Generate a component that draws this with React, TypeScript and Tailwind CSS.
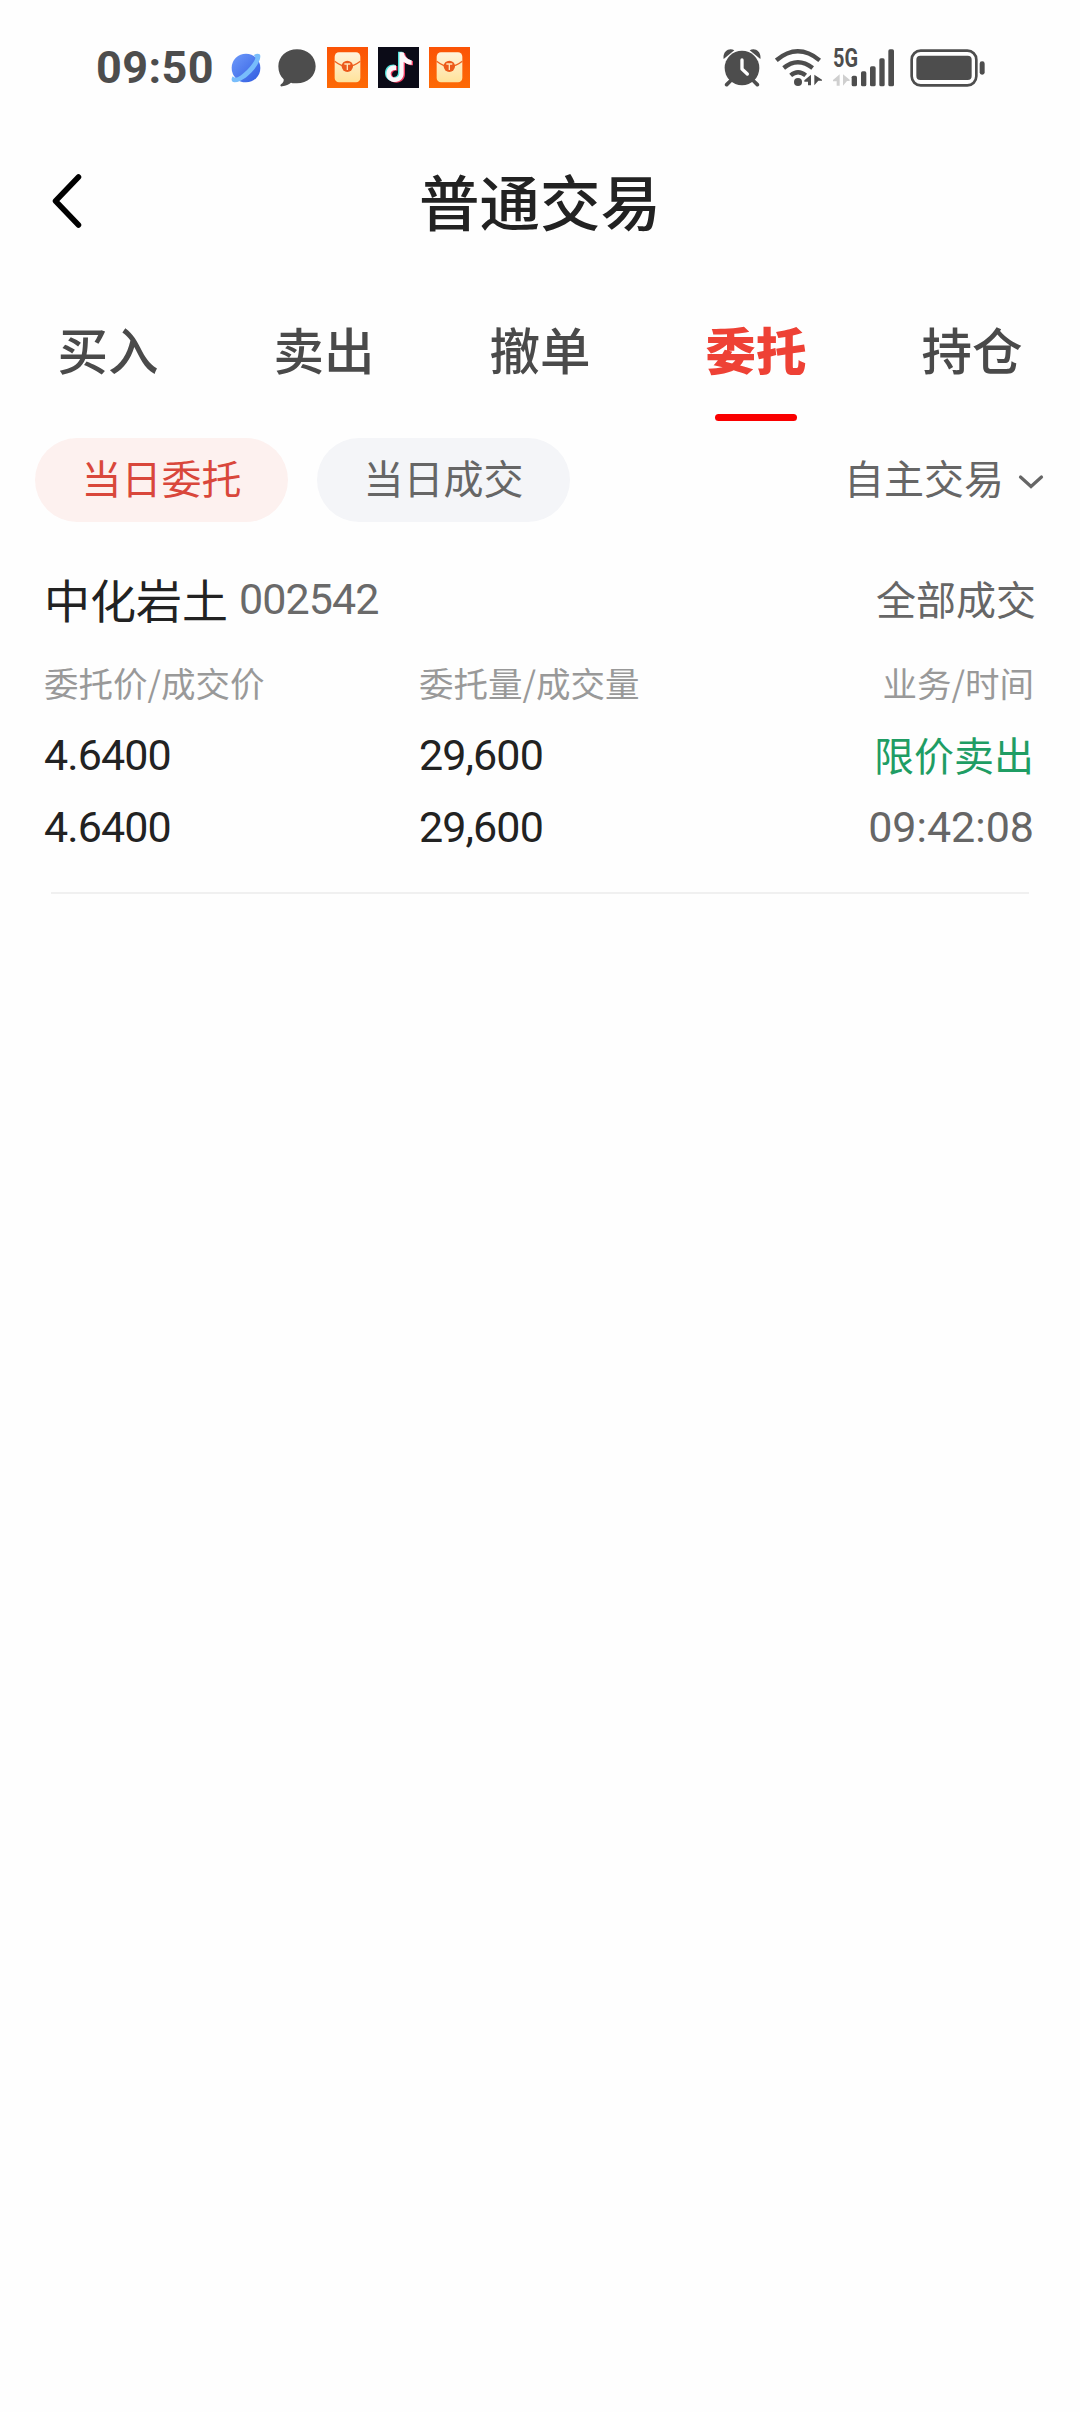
import React from 'react';

const tabs = ['买入', '卖出', '撤单', '委托', '持仓'];

const orders = [
    {
        name: '中化岩土',
        code: '002542',
        status: '全部成交',
        orderPrice: '4.6400',
        dealPrice: '4.6400',
        orderQty: '29,600',
        dealQty: '29,600',
        type: '限价卖出',
        time: '09:42:08',
    },
];

function PlanetIcon() {
    return (
        <svg viewBox="0 0 90 90" className="ml-[17px] h-[30px] w-[30px]">
            <defs>
                <linearGradient id="planet" x1="0" y1="0" x2="1" y2="1">
                    <stop offset="0" stopColor="#6f9bfb" />
                    <stop offset="1" stopColor="#2f5be0" />
                </linearGradient>
            </defs>
            <circle cx="45" cy="45" r="43" fill="url(#planet)" />
            <path d="M68 7 C76 0 88 0 88 9 C88 38 42 86 11 88 C0 88 0 78 5 70 C10 76 18 75 28 68 C46 56 66 34 72 19 C74 13 73 9 68 7Z" fill="#78bdfb" />
        </svg>
    );
}

function BubbleIcon() {
    return (
        <svg viewBox="0 0 114 114" className="ml-[17px] h-[38px] w-[38px]">
            <path d="M57 1C26 1 1 23 1 52c0 17 6 30 16 39 1 6-2 11-8 15-4 4-1 7 4 6 11-2 19-6 26-11 6 2 12 2 18 2 31 0 56-22 56-51S88 1 57 1Z" fill="#4d4d4d" />
        </svg>
    );
}

function PacketIcon() {
    return (
        <svg viewBox="0 0 123 123" className="h-[41px] w-[41px]">
            <defs>
                <linearGradient id="packetBg" x1="0" y1="0" x2="0" y2="1">
                    <stop offset="0" stopColor="#fb5306" />
                    <stop offset="1" stopColor="#fd6a05" />
                </linearGradient>
                <linearGradient id="packet" x1="0" y1="0" x2="0" y2="1">
                    <stop offset="0" stopColor="#fff3dc" />
                    <stop offset="1" stopColor="#ffe29a" />
                </linearGradient>
            </defs>
            <rect width="123" height="123" fill="url(#packetBg)" />
            <rect x="23" y="16" width="77" height="90" rx="13" fill="url(#packet)" />
            <path d="M23 43Q42 58 61 59Q81 58 100 43" fill="none" stroke="#ef6420" strokeWidth="4" />
            <circle cx="61" cy="58" r="17" fill="#ec5a1b" />
            <path d="M52 51H70M61 51V69" stroke="#ffe3b8" strokeWidth="4" />
        </svg>
    );
}

function TiktokIcon() {
    const note = 'M64 16H77C79 29 88 38 101 40V53C92 53 84 50 77 45V79C77 95 66 105 51 105C36 105 25 95 25 80C25 64 38 53 54 55V69C46 68 38 72 38 80C38 87 44 92 51 92C58 92 64 87 64 79Z';
    return (
        <svg viewBox="0 0 123 123" className="h-[41px] w-[41px]">
            <rect width="123" height="123" fill="#0b0b17" />
            <path d={note} fill="#4fe3dc" transform="translate(-4 -2)" />
            <path d={note} fill="#ef3e63" transform="translate(4 2)" />
            <path d={note} fill="#fbf7fa" />
        </svg>
    );
}

function AlarmIcon() {
    return (
        <svg viewBox="0 0 114 114" className="h-[38px] w-[38px]">
            <circle cx="57" cy="57" r="52" fill="#4d4d4d" />
            <path d="M2 30C-2 8 18-6 34 4Z M112 30C116 8 96-6 80 4Z" fill="#4d4d4d" />
            <path d="M22 96L11 107M92 96L103 107" stroke="#4d4d4d" strokeWidth="11" strokeLinecap="round" />
            <path d="M57 33V60L73 75" fill="none" stroke="#fefefe" strokeWidth="10" strokeLinecap="round" strokeLinejoin="round" />
        </svg>
    );
}

function WifiIcon() {
    return (
        <svg viewBox="0 0 144 114" className="ml-[14px] h-[38px] w-[48px]">
            <g fill="none" stroke="#4d4d4d" strokeWidth="13">
                <path d="M4 34Q68-20 134 34" />
                <path d="M26 57Q68 22 113 57" />
                <path d="M47 79Q69 60 92 79" />
            </g>
            <circle cx="69" cy="99" r="12" fill="#4d4d4d" />
            <path d="M108 77V109H99V98H88V94Z M118 77L141 92V95H130L118 109Z" fill="#4d4d4d" />
        </svg>
    );
}

function SignalIcon() {
    return (
        <div className="relative ml-[10px] h-[38px] w-[62px]">
            <span className="absolute -top-[5px] left-0 origin-left scale-x-[0.78] font-[Roboto] text-[25.5px] leading-[28px] font-bold text-[#4d4d4d]">5G</span>
            <svg viewBox="0 0 186 114" className="h-[38px] w-[62px]">
                <path d="M20 76V110H11V97H0V93Z M30 76L50 92V96H42L30 110Z" fill="#cfcfcf" />
                <g fill="#4d4d4d">
                    <rect x="56" y="80" width="16" height="32" rx="5" />
                    <rect x="84" y="67" width="16" height="45" rx="5" />
                    <rect x="111" y="52" width="17" height="60" rx="5" />
                    <rect x="139" y="28" width="16" height="84" rx="5" />
                    <rect x="166" y="1" width="17" height="111" rx="5" />
                </g>
            </svg>
        </div>
    );
}

function BatteryIcon() {
    return (
        <svg viewBox="0 0 228 114" className="ml-[15px] h-[38px] w-[76px]">
            <rect x="5" y="5" width="194" height="104" rx="27" fill="none" stroke="#4d4d4d" strokeWidth="8" />
            <rect x="19" y="20" width="166" height="73" rx="12" fill="#4d4d4d" />
            <rect x="209" y="37" width="15" height="40" rx="7" fill="#4d4d4d" />
        </svg>
    );
}

function StatusBar() {
    return (
        <div className="flex h-[135px] items-center justify-between pr-[94px] pl-[96px]">
            <div className="flex items-center">
                <span className="font-[Roboto] text-[45px] leading-none font-bold tracking-[0.4px] text-[#4d4d4d]">09:50</span>
                <PlanetIcon />
                <BubbleIcon />
                <div className="ml-[11px] flex gap-[10px]">
                    <PacketIcon />
                    <TiktokIcon />
                    <PacketIcon />
                </div>
            </div>
            <div className="flex items-center">
                <AlarmIcon />
                <WifiIcon />
                <SignalIcon />
                <BatteryIcon />
            </div>
        </div>
    );
}

export default function App() {
    const activeTab = '委托';

    return (
        <div className="h-[2412px] w-[1080px] bg-[#fefefe] font-['Noto_Sans_CJK_SC',sans-serif] text-[#222]">
            <StatusBar />

            <header className="grid h-[132px] grid-cols-3 items-center">
                <svg viewBox="0 0 30 56" className="ml-[52px] h-[56px] w-[30px]">
                    <path d="M26.500 4L3.500 28L26.500 52" fill="none" stroke="#000" strokeWidth="5.500" strokeLinecap="round" strokeLinejoin="round" />
                </svg>
                <h1 className="flex justify-center pb-[2px] text-[60.5px] leading-none font-medium whitespace-nowrap">普通交易</h1>
            </header>

            <nav className="grid h-[154px] grid-cols-5">
                {tabs.map(tab => (
                    <div key={tab} className="flex flex-col items-center justify-between pt-[56px]">
                        <span className={tab === activeTab ? 'text-[50.5px] leading-none font-black text-[#ee4135]' : 'text-[50.5px] leading-none font-medium text-[#4a4a4a]'}>
                            {tab}
                        </span>
                        {tab === activeTab && <span className="h-[7px] w-[82px] rounded-full bg-[#fa0000]" />}
                    </div>
                ))}
            </nav>

            <div className="mt-[17px] flex h-[84px] items-center pr-[36px] pl-[35px] text-[40px] leading-none text-[#666]">
                <button className="h-[84px] w-[253px] rounded-full bg-[#fdf1ef] pb-[6px] text-[#d9473b]">当日委托</button>
                <button className="ml-[29px] h-[84px] w-[253px] rounded-full bg-[#f4f5f8] pb-[6px]">当日成交</button>
                <div className="ml-auto flex items-center gap-[14px] pb-[6px]">
                    <span>自主交易</span>
                    <svg viewBox="0 0 26 16" className="mt-[10px] h-[16px] w-[26px]">
                        <path d="M2.500 3L13 12.500L23.500 3" fill="none" stroke="#666" strokeWidth="3.200" strokeLinecap="round" />
                    </svg>
                </div>
            </div>

            {orders.map(order => (
                <section key={order.code} className="px-[44px] pt-[50px]">
                    <div className="flex h-[56px] items-center">
                        <span className="pb-[5px] text-[46px] leading-none">{order.name}</span>
                        <span className="ml-[11px] pb-[2px] font-[Roboto] text-[43px] leading-none tracking-[-0.9px] text-[#6a6a6a]">{order.code}</span>
                        <span className="ml-auto pb-[4px] text-[40px] leading-none text-[#666]">{order.status}</span>
                    </div>
                    <div className="mt-[29px] grid grid-cols-[375px_1fr_1fr] pr-[2px] text-[34.5px] leading-[50px] text-[#999]">
                        <span>委托价/成交价</span>
                        <span>委托量/成交量</span>
                        <span className="text-right">业务/时间</span>
                    </div>
                    <div className="mt-[12px] grid grid-cols-[375px_1fr_1fr] pr-[2px] font-[Roboto] text-[43px] leading-[72px] tracking-[-0.9px]">
                        <span>{order.orderPrice}</span>
                        <span>{order.orderQty}</span>
                        <span className="h-[72px] text-right font-['Noto_Sans_CJK_SC',sans-serif] text-[40px] leading-[70px] tracking-normal text-[#1f9d64]">{order.type}</span>
                        <span>{order.dealPrice}</span>
                        <span>{order.dealQty}</span>
                        <span className="text-right tracking-normal text-[#666]">{order.time}</span>
                    </div>
                    <div className="mx-[7px] mt-[29px] h-[2px] bg-[#f0f0f0]" />
                </section>
            ))}
        </div>
    );
}
